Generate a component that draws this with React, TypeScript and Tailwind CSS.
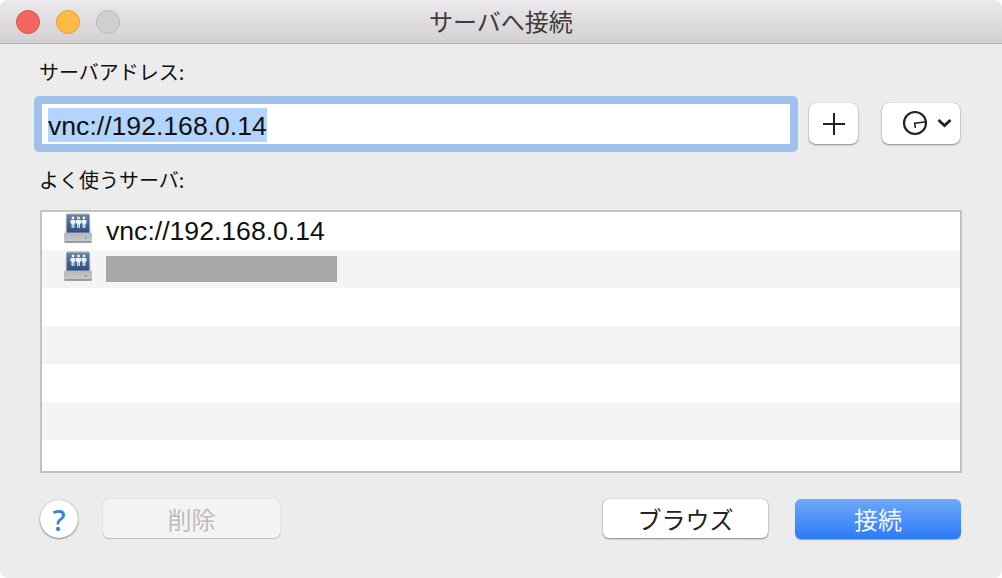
const jp = { fontFamily: '"Noto Sans CJK JP", "Liberation Sans", sans-serif' };

function Person({ x }: { x: number }) {
  return (
    <g fill="#eef3f9">
      <circle cx={x} cy="5" r="1.4" />
      <path d={`M${x - 2.5} 7 H${x + 2.5} V10.5 H${x + 1.4} V15 H${x + 0.3} V11.5 H${x - 0.3} V15 H${x - 1.4} V10.5 H${x - 2.5}Z`} />
    </g>
  );
}

function ServerIcon() {
  return (
    <svg width="30" height="30" viewBox="0 0 30 30" className="shrink-0 self-start mt-[1px]">
      <defs>
        <linearGradient id="blue" x1="0" y1="0" x2="0" y2="1">
          <stop offset="0" stopColor="#5f82b0" />
          <stop offset="1" stopColor="#2c4d80" />
        </linearGradient>
        <linearGradient id="base" x1="0" y1="0" x2="0" y2="1">
          <stop offset="0" stopColor="#b3b5b7" />
          <stop offset="1" stopColor="#c9cacb" />
        </linearGradient>
      </defs>
      <path d="M2.5 21 L3 2.5 Q3 0.5 5 0.5 H25 Q27 0.5 27 2.5 L27.5 21Z" fill="#a4a6a9" />
      <rect x="1" y="19.5" width="28" height="10" rx="1.5" fill="url(#base)" />
      <rect x="1.5" y="28.3" width="27" height="1.4" fill="#808284" />
      <rect x="4" y="2" width="22" height="17.5" fill="url(#blue)" />
      <Person x={10} />
      <Person x={15.5} />
      <Person x={21} />
      <circle cx="23" cy="25" r="1" fill="#6fa87e" />
    </svg>
  );
}

export default function App() {
  return (
    <div className="w-[1002px] h-[578px] overflow-hidden bg-white" style={{ fontFamily: '"Liberation Sans", "Noto Sans CJK JP", sans-serif' }}>
      <div className="w-full h-full flex flex-col bg-[#ececec] rounded-[8px] overflow-hidden">
        <div className="h-[44px] shrink-0 flex items-center bg-gradient-to-b from-[#ebe9eb] to-[#d2d0d2] border-b border-[#b1afb1]">
          <div className="flex gap-[16px] pl-[16px]">
            <div className="w-[24px] h-[24px] rounded-full bg-[#f4655e] border border-[#de4f48]" />
            <div className="w-[24px] h-[24px] rounded-full bg-[#fcbb45] border border-[#dea334]" />
            <div className="w-[24px] h-[24px] rounded-full bg-[#d0ced0] border border-[#b9b7b9]" />
          </div>
          <div className="flex-1 text-center text-[24px] leading-none text-[#3e3c3e] pr-[120px] -mt-[2px]" style={jp}>サーバへ接続</div>
        </div>

        <div className="flex-1 flex flex-col pl-[34px] pr-[41px]">
          <div className="pl-[5px] pt-[15px] h-[52px] text-[20px] leading-[26px] text-[#111]" style={jp}>サーバアドレス:</div>

          <div className="flex items-start h-[56px]">
            <div className="w-[764px] h-[56px] rounded-[5px] bg-[#a0c1ec] p-[8px] flex">
              <div className="flex-1 bg-white pl-[6px] flex items-start pt-[4px]">
                <span className="block bg-[#b3d5fd] text-[26.6px] leading-[36px] h-[34px] text-[#111]">vnc://192.168.0.14</span>
              </div>
            </div>
            <button className="ml-[11px] mt-[7px] w-[49px] h-[41px] rounded-[7px] bg-white shadow-[0_1px_2px_rgba(0,0,0,0.4),0_0_1px_rgba(0,0,0,0.3)] flex items-center justify-center">
              <svg width="22" height="22" viewBox="0 0 22 22"><path d="M11 0 V22 M0 11 H22" stroke="#222" strokeWidth="2" /></svg>
            </button>
            <button className="ml-[24px] mt-[7px] w-[78px] h-[41px] rounded-[7px] bg-white shadow-[0_1px_2px_rgba(0,0,0,0.4),0_0_1px_rgba(0,0,0,0.3)] flex items-center pl-[20px]">
              <svg width="26" height="26" viewBox="0 0 26 26" className="-mt-[1px]"><circle cx="13" cy="13" r="11" fill="none" stroke="#222" strokeWidth="2.2" /><path d="M13.3 18 L12.7 13.2 L23 12" fill="none" stroke="#222" strokeWidth="1.6" /></svg>
              <svg width="15" height="10" viewBox="0 0 15 10" className="ml-[9px] -mt-[2px]"><path d="M1.5 2 L7.5 7.5 L13.5 2" fill="none" stroke="#222" strokeWidth="2.8" /></svg>
            </button>
          </div>

          <div className="pl-[5px] pt-[15px] h-[58px] text-[20px] leading-[26px] text-[#111]" style={jp}>よく使うサーバ:</div>

          <div className="ml-[6px] w-[922px] h-[263px] border-2 border-[#c2c2c2] bg-white flex flex-col">
            <div className="h-[38px] flex items-center pl-[21px] gap-[13px]">
              <ServerIcon />
              <span className="text-[26.6px] text-[#111] mt-[1px]">vnc://192.168.0.14</span>
            </div>
            <div className="h-[38px] bg-[#f4f4f4] flex items-center pl-[21px] gap-[13px]">
              <ServerIcon />
              <div className="w-[231px] h-[26px] bg-[#a8a8a8]" />
            </div>
            <div className="h-[38px]" />
            <div className="h-[38px] bg-[#f4f4f4]" />
            <div className="h-[38px]" />
            <div className="h-[38px] bg-[#f4f4f4]" />
          </div>

          <div className="flex items-start mt-[26px] pl-[6px] w-[927px]">
            <button className="w-[38px] h-[38px] mt-[1px] rounded-full bg-white shadow-[0_1px_2px_rgba(0,0,0,0.4),0_0_1px_rgba(0,0,0,0.4)] text-[#3a7fd9] text-[29px] font-['Noto_Sans'] font-medium leading-none flex items-center justify-center">?</button>
            <button className="ml-[25px] w-[177px] h-[39px] rounded-[6px] bg-[#f4f4f4] shadow-[0_1px_1px_rgba(0,0,0,0.18),0_0_1px_rgba(0,0,0,0.25)] text-[#bdbbbb] text-[24px] leading-none" style={jp}>削除</button>
            <button className="ml-auto w-[165px] h-[39px] rounded-[6px] bg-white shadow-[0_1px_2px_rgba(0,0,0,0.4),0_0_1px_rgba(0,0,0,0.4)] text-[#222] text-[24px] leading-none" style={jp}>ブラウズ</button>
            <button className="ml-[27px] w-[166px] h-[40px] rounded-[6px] bg-gradient-to-b from-[#6ea8f7] to-[#2a7af6] shadow-[0_1px_1px_rgba(0,60,160,0.4)] text-[#f2f6fd] text-[24px] leading-none" style={jp}>接続</button>
          </div>
        </div>
      </div>
    </div>
  );
}
